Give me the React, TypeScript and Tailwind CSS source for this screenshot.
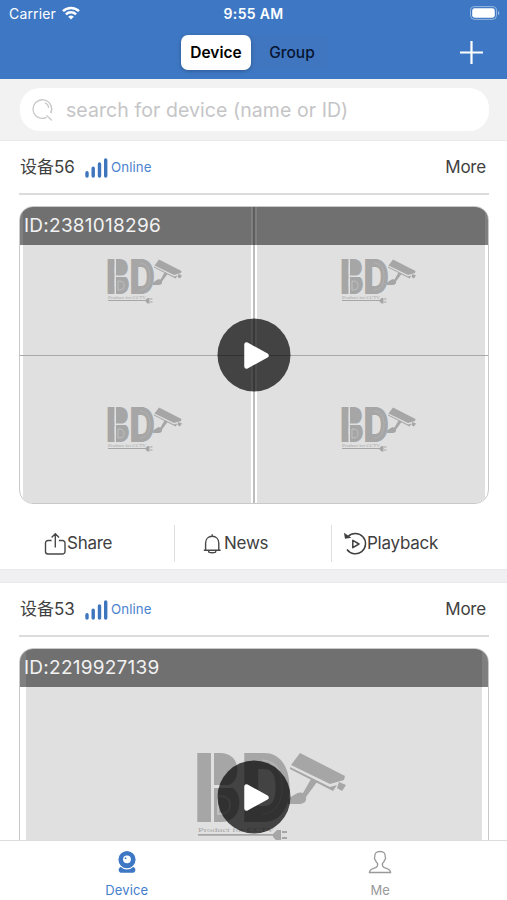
import type { ReactNode } from 'react';

interface Device {
  name: string;
  id: string;
  channels: number;
}

const DEVICES: Device[] = [
  { name: '设备56', id: '2381018296', channels: 4 },
  { name: '设备53', id: '2219927139', channels: 1 },
];

export default function App() {
  return (
    <div className="flex h-[900px] w-[507px] flex-col overflow-hidden bg-white font-['Inter','Noto_Sans_CJK_SC',sans-serif] text-[#404040]">
      <Header />
      <SearchBar />
      <main className="min-h-0 flex-1 overflow-hidden">
        {DEVICES.map((d) => (
          <DeviceCard key={d.id} device={d} />
        ))}
      </main>
      <TabBar />
    </div>
  );
}

function Header() {
  return (
    <header className="h-[79px] shrink-0 bg-[#3e78c4]">
      <div className="grid h-[27px] grid-cols-3 items-center pr-[7px] pl-[9px] text-white">
        <div className="flex items-center gap-[6px] text-[14px] tracking-[0.15px]">
          <span>Carrier</span>
          <svg width="18" height="14" viewBox="0 0 18 14" fill="none" stroke="white" strokeWidth="2.5" className="-mt-[2px]">
            <path d="M1 5.2a11.4 11.4 0 0 1 16 0" />
            <path d="M3.9 8.4a7.4 7.4 0 0 1 10.2 0" />
            <path d="M9 13.6 6.2 10.8a4 4 0 0 1 5.6 0Z" fill="white" stroke="none" />
          </svg>
        </div>
        <span className="pr-[2px] text-center text-[14px] font-semibold tracking-[0.3px]">9:55 AM</span>
        <svg className="-mt-px justify-self-end" width="31" height="14" viewBox="0 0 31 14">
          <rect x="1.5" y=".6" width="26" height="12.8" rx="4" fill="none" stroke="white" strokeOpacity=".45" />
          <rect x="3.2" y="2.3" width="22.6" height="9.4" rx="2.4" fill="white" />
          <path d="M29 4.8c1.8.8 1.8 3.6 0 4.4Z" fill="white" fillOpacity=".5" />
        </svg>
      </div>
      <div className="flex h-[52px] items-center pr-[24px] pl-[181px]">
        <div className="-mt-[2px] flex rounded-lg bg-[#4076c0] text-[15.5px] font-medium text-black">
          <button className="h-[35px] w-[70px] rounded-[7px] bg-white pt-px font-semibold shadow-[0_1px_4px_rgba(0,0,0,0.25)]">
            Device
          </button>
          <button className="h-[35px] w-[78px] pt-px pl-[4px] text-[#071530]">Group</button>
        </div>
        <svg className="-mt-[2px] ml-auto" width="23" height="23" viewBox="0 0 23 23" stroke="white" strokeWidth="2.2">
          <path d="M11.5 0v23M0 11.5h23" />
        </svg>
      </div>
    </header>
  );
}

function SearchBar() {
  return (
    <div className="h-[62px] shrink-0 border-b border-[#e9e9ea] bg-[#f2f2f3] pt-[9px] pr-[18px] pl-[20px]">
      <div className="flex h-[43px] items-center rounded-[20px] bg-white pl-[12px]">
        <svg width="22" height="24" viewBox="0 0 22 24" fill="none" stroke="#c9c9c9" strokeWidth="1.3" strokeLinecap="round">
          <path d="M14 19.6A9.3 9.3 0 1 1 19 14.5" />
          <path d="M19 14.5a9.3 9.3 0 0 0 .2-6.4M13.3 5c2 .8 3 2.3 3.3 4.3M14.8 17.7l4.7 4.3" />
        </svg>
        <span className="ml-[12px] pt-[2px] text-[19.5px] tracking-[0.07px] text-[#c5c5c7]">search for device (name or ID)</span>
      </div>
    </div>
  );
}

function DeviceCard({ device }: { device: Device }) {
  return (
    <section>
      <div className="mr-[18px] ml-[19px] flex h-[54px] items-center border-b-2 border-[#dcdcdc] pt-px pr-[3px] pl-[1px] text-[17px]">
        <span className="w-[65px] whitespace-nowrap">{device.name}</span>
        <svg width="23" height="20" viewBox="0 0 23 20" stroke="#3e75bd" strokeWidth="3.4" strokeLinecap="round">
          <path d="M2 14.7v3.4M8.2 10.3v7.8M14.5 6v12.1M20.7 1.9v16.2" />
        </svg>
        <span className="ml-[3px] text-[13.3px] tracking-[0.1px] text-[#4c83cf]">Online</span>
        <span className="ml-auto tracking-[-0.2px]">More</span>
      </div>

      <div className="relative mt-[11px] mr-[18px] ml-[19px] h-[298px] overflow-hidden rounded-[14px] border border-[#c9c9c9] bg-white">
        {device.channels === 4 ? (
          <div className="grid h-full grid-cols-2 grid-rows-2">
            <Tile />
            <Tile />
            <Tile />
            <Tile />
            <div className="absolute inset-x-0 top-1/2 h-px bg-[#a9a9a9]" />
            <div className="absolute top-0 left-1/2 h-full w-[2px] -translate-x-1/2 bg-[#bdbdbd]" />
          </div>
        ) : (
          <div className="mx-[6px] flex h-full items-center justify-center bg-[#e0e0e0] pt-[2px] pl-[37px]">
            <Logo className="h-[92px] w-[150px]" />
          </div>
        )}
        <div className="absolute inset-x-0 top-0 flex h-[38px] items-center bg-black/50 pt-px pl-[4px] text-[19px] tracking-[0.25px] text-[#f2f2f2]">
          ID:{device.id}
        </div>
        <button className="absolute top-1/2 left-1/2 flex size-[73px] -translate-x-1/2 -translate-y-1/2 items-center justify-center rounded-full bg-black/70">
          <svg width="26" height="28" viewBox="0 0 26 28" className="ml-[5px]">
            <path d="M3 3v22L23 14Z" fill="white" stroke="white" strokeWidth="4.5" strokeLinejoin="round" />
          </svg>
        </button>
      </div>

      <div className="flex h-[65px] items-start pt-[21px] text-[17px] tracking-[-0.25px]">
        <Action className="w-[175px] border-r pl-[44px]" label="Share">
          <svg width="23" height="24" viewBox="0 0 23 24" fill="none" stroke="#484848" strokeWidth="1.4">
            <path d="M7.6 8.5H4A2.5 2.5 0 0 0 1.5 11v8.5A2.5 2.5 0 0 0 4 22h14.5a2.5 2.5 0 0 0 2.5-2.5V11a2.5 2.5 0 0 0-2.5-2.5h-3.6M11.3 15.5V2M7.6 5.6l3.7-3.9L15 5.6" />
          </svg>
        </Action>
        <Action className="w-[157px] border-r pl-[28px]" label="News">
          <svg width="21" height="22" viewBox="0 0 21 22" fill="none" stroke="#484848" strokeWidth="1.4">
            <path d="M2.6 16.8v-6.6c0-4.2 2.8-7 6.6-7s6.6 2.8 6.6 7v6.6M.8 17.3h16.8M5.7 17.5v1.3c0 1.3 7 1.3 7 0v-1.3M9.2 3V1.2" />
          </svg>
        </Action>
        <Action className="pl-[12px]" label="Playback">
          <svg width="23" height="24" viewBox="0 0 23 24" fill="none" stroke="#404040" strokeWidth="1.5">
            <path d="M4 4.5A10.2 10.2 0 1 1 3 17.5" />
            <path d="M1 2.3 1.6 6 5.4 5.4Z" fill="#404040" />
            <path d="M8.8 8.3v7.4L15 12Z" strokeLinejoin="round" />
          </svg>
        </Action>
      </div>
      <div className="h-[14px] border-y border-[#e8e8ea] bg-[#f0f0f2]" />
    </section>
  );
}

function Action({ className, label, children }: { className: string; label: string; children: ReactNode }) {
  return (
    <button className={`flex h-[37px] items-center border-[#dedede] ${className}`}>
      {children}
      <span className="pt-px">{label}</span>
    </button>
  );
}

function Tile() {
  return (
    <div className="mx-[3px] flex items-center justify-center bg-[#e0e0e0] pt-px pl-[17px]">
      <Logo className="h-[46px] w-[75px]" />
    </div>
  );
}

function Logo({ className }: { className: string }) {
  return (
    <svg className={`overflow-visible ${className}`} viewBox="0 0 150 92" fill="#a6a6a6">
      <text x="-4" y="70" fontSize="95" textLength="98" lengthAdjust="spacingAndGlyphs" className="font-['Inter',sans-serif] font-black">
        BD
      </text>
      {/* stencil cuts */}
      <rect x="15" y="8" width="16" height="24" />
      <rect x="15" y="38" width="16" height="26" />
      <path d="M14.5 0v72M14 34.5h26" stroke="#e0e0e0" strokeWidth="3" fill="none" />
      <path d="M20 44c9 0 12 3 12 9s-3 9-12 9Z" stroke="#c9c9c9" strokeWidth="1.5" fill="none" />
      <path d="M64 8c13 1 20 10 20 27s-7 26-20 27" stroke="#b8b8b8" strokeWidth="1.2" fill="none" />
      {/* camera */}
      <path d="M102 1 147 24l-1 4-14 4-39-19Z" />
      <path d="m92 15 40 20 7-2-4 6-43-22ZM141 30l7 3-4 6-5-3ZM113 27l6 3-11 15c1 5-3 7-7 7H90v-5l6-4c4-3 7-3 9-2Z" />
      <text x="0" y="80" fontSize="6.5" textLength="76" lengthAdjust="spacingAndGlyphs" className="font-['Liberation_Serif',serif]">
        Product for CCTV
      </text>
      <path d="M0 82h75v1.8H0ZM75 82l4-4h4v11h-4l-4-4ZM84 79h5v2h-5ZM84 85h5v2h-5Z" />
    </svg>
  );
}

function TabBar() {
  return (
    <nav className="flex h-[60px] shrink-0 border-t border-[#dcdcdc] bg-white text-[13px] tracking-[0.15px]">
      <button className="flex flex-1 flex-col items-center pt-[9px] text-[#4480cc]">
        <svg width="20" height="25" viewBox="0 0 20 25" fill="#3e78c4">
          <path d="M4 16.5h12l1.7 1.5c1.5 2 .2 4.800-2 4.800H4.300c-2.200 0-3.500-2.800-2-4.800Z" />
          <circle cx="10" cy="9.6" r="9.2" stroke="white" strokeWidth="1.2" />
          <circle cx="10" cy="9.3" r="3.9" fill="white" />
          <circle cx="8.6" cy="8.2" r=".9" />
        </svg>
        <span className="mt-[6px] leading-[18px]">Device</span>
      </button>
      <button className="flex flex-1 flex-col items-center pt-[9px] text-[#999]">
        <svg width="24" height="25" viewBox="0 0 24 25" fill="none" stroke="#999" strokeWidth="1.3">
          <path d="M12 1.5c-4 0-5.500 2-5.200 5.500-.8.7-.3 2.600.6 3 .4 1.800 1.200 2.700 2.200 3.600.3 2.600-.4 3.400-2 4-3.500 1.200-6 1.400-6.200 4.900h21.200c-.2-3.500-2.700-3.700-6.200-4.900-1.600-.6-2.300-1.400-2-4 1-.9 1.800-1.800 2.200-3.600.9-.4 1.400-2.300.6-3 .3-3.500-1.200-5.500-5.200-5.500Z" />
        </svg>
        <span className="mt-[6px] leading-[18px]">Me</span>
      </button>
    </nav>
  );
}
